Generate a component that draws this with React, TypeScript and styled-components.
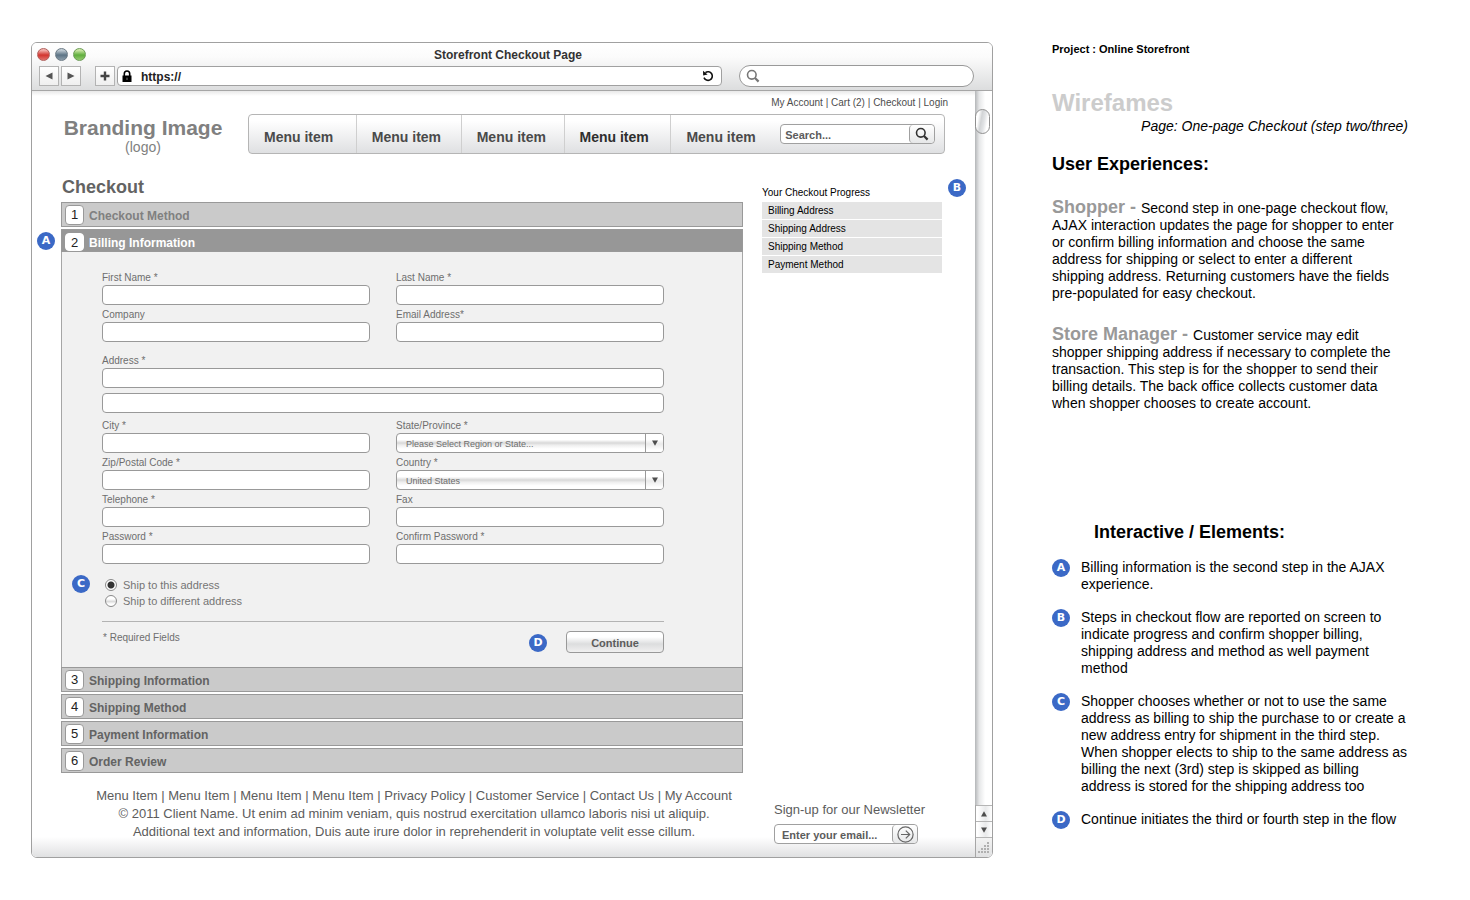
import React from "react";
import styled, { createGlobalStyle, css } from "styled-components";

const GlobalStyle = createGlobalStyle`
  *, *::before, *::after { box-sizing: border-box; }
  body {
    margin: 0;
    background: #fff;
    color: #000;
    font-family: "Liberation Sans", Arial, Helvetica, sans-serif;
  }
  h1, h2, h3, p, ul, ol { margin: 0; padding: 0; }
  ul, ol { list-style: none; }
  a { color: inherit; text-decoration: none; }
  button, input, select { font-family: inherit; margin: 0; }
`;

const Page = styled.div`
  display: grid;
  grid-template-columns: minmax(0, 1fr) 356px;
  column-gap: 59px;
  align-items: start;
  padding: 42px 62px 42px 31px;
`;

/* ---------- browser window ---------- */

const Window = styled.main`
  border: 1px solid #a0a0a0;
  border-radius: 6px;
  overflow: hidden;
`;

const Chrome = styled.header`
  padding: 2px 18px 3px 5px;
  border-bottom: 1px solid #a6a6a6;
  background: linear-gradient(#fff 0%, #fbfbfb 30%, #dcddde 100%);
`;

const TitleRow = styled.div`
  display: grid;
  grid-template-columns: 60px minmax(0, 1fr) 55px;
  align-items: center;
  height: 19px;
`;

const Lights = styled.div`
  display: flex;
  gap: 5px;
`;

const Light = styled.span<{ $top: string; $base: string; $rim: string }>`
  width: 13px;
  height: 13px;
  border: 1px solid ${(p) => p.$rim};
  border-radius: 50%;
  background: linear-gradient(${(p) => p.$top} 10%, ${(p) => p.$base} 55%, ${(p) => p.$top} 150%);
`;

const WindowTitle = styled.h1`
  font-size: 12px;
  line-height: 16px;
  font-weight: bold;
  color: #333;
  text-align: center;
`;

const ToolRow = styled.div`
  display: flex;
  align-items: center;
  gap: 2px;
  height: 22px;
  margin-top: 1px;
  padding-left: 2px;
`;

const ToolButton = styled.button<{ $spaced?: boolean }>`
  display: flex;
  align-items: center;
  justify-content: center;
  width: 20px;
  height: 20px;
  margin-left: ${(p) => (p.$spaced ? 12 : 0)}px;
  padding: 0;
  border: 1px solid #b3b3b3;
  background: linear-gradient(#fff, #efefef);
`;

const AddressBar = styled.label`
  display: flex;
  flex: 1;
  align-items: center;
  gap: 9px;
  min-width: 0;
  height: 20px;
  margin-right: 15px;
  padding: 0 7px 0 4px;
  border: 1px solid #a0a0a0;
  border-radius: 4px;
  background: #fff;
`;

const BareInput = styled.input`
  flex: 1;
  min-width: 0;
  padding: 2px 0 0;
  border: 0;
  outline: 0;
  background: transparent;
  font-size: 12px;
  line-height: 16px;
  font-weight: bold;
  color: #222;
`;

const ChromeSearch = styled.label`
  display: flex;
  flex: 0 0 235px;
  align-items: center;
  gap: 6px;
  height: 22px;
  padding: 0 8px 0 6px;
  border: 1px solid #999;
  border-radius: 11px;
  background: #fff;
`;

const Viewport = styled.div`
  display: grid;
  grid-template-columns: minmax(0, 1fr) 17px;
`;

const Content = styled.div`
  padding: 6px 27px 13px 29px;
  background:
    linear-gradient(#e9e9e9, #fff) top / 100% 5px no-repeat,
    linear-gradient(#fff, #e0e1e2) bottom / 100% 20px no-repeat,
    #fff;
`;

/* ---------- scroll bar ---------- */

const ScrollBar = styled.div`
  display: flex;
  flex-direction: column;
  background: linear-gradient(90deg, #b4b6b8, #e6e7e8 25%, #fff 60%);
`;

const ScrollThumb = styled.span`
  width: 15px;
  height: 25px;
  margin-top: 18px;
  border: 1px solid #8f8f8f;
  border-radius: 8px;
  background: linear-gradient(100deg, #fff 20%, #d2d4d6 40%, #e2e4e6 60%, #fff 80%);
`;

const ScrollEnd = styled.div`
  margin-top: auto;
  border-left: 1px solid #a6a6a6;
`;

const ScrollButton = styled.button`
  display: flex;
  align-items: center;
  justify-content: center;
  width: 16px;
  height: 16px;
  padding: 0;
  border: 0;
  border-top: 1px solid #b5b5b5;
  background: linear-gradient(90deg, #fff 10%, #e9eaeb 60%, #fff);
`;

const ResizeGrip = styled.div`
  display: flex;
  align-items: center;
  justify-content: center;
  height: 20px;
  border-top: 1px solid #b5b5b5;
  background: linear-gradient(#f3f3f3, #e0e1e2);
`;

/* ---------- store header ---------- */

const StoreHeader = styled.header`
  display: grid;
  grid-template-columns: 187px minmax(0, 1fr);
  align-items: end;
`;

const Brand = styled.a`
  width: 164px;
  text-align: center;
  color: #808080;
`;

const BrandName = styled.strong`
  display: block;
  font-size: 21px;
  line-height: 24px;
  white-space: nowrap;
`;

const BrandNote = styled.span`
  display: block;
  font-size: 14px;
  line-height: 14px;
`;

const AccountLinks = styled.nav`
  margin-bottom: 5px;
  font-size: 10px;
  line-height: 12px;
  text-align: right;
  color: #4d4d4d;
`;

const MenuBar = styled.nav`
  display: grid;
  grid-template-columns: 108fr 105fr 103fr 107fr 109fr 164fr;
  align-items: center;
  height: 40px;
  margin-right: 3px;
  border: 1px solid #b5b5b5;
  border-radius: 4px;
  background: linear-gradient(#fff 15%, #dfe0e2);
`;

const MenuLink = styled.a<{ $current?: boolean; $last?: boolean }>`
  height: 38px;
  padding: 6px 0 0 15px;
  border-right: ${(p) => (p.$last ? "0" : "1px solid #cfcfcf")};
  font-size: 14px;
  line-height: 32px;
  font-weight: bold;
  white-space: nowrap;
  color: ${(p) => (p.$current ? "#2e2e2e" : "#4a4a4a")};
`;

const InlineForm = styled.form<{ $width: number }>`
  display: flex;
  width: ${(p) => p.$width}px;
  height: 20px;
  border: 1px solid #a0a0a0;
  border-radius: 4px;
  background: #fff;
  overflow: hidden;
`;

const InlineInput = styled.input<{ $inset: number }>`
  flex: 1;
  min-width: 0;
  padding: 1px 0 0 ${(p) => p.$inset}px;
  border: 0;
  outline: 0;
  background: transparent;
  font-size: 11px;
  line-height: 14px;
  font-weight: bold;
  &::placeholder { color: #5c5c5c; opacity: 1; }
`;

const InlineSubmit = styled.button`
  display: flex;
  align-items: center;
  justify-content: center;
  flex: 0 0 25px;
  padding: 0;
  border: 0;
  border-left: 1px solid #a0a0a0;
  border-radius: 4px;
  background: linear-gradient(#fff, #e6e7e8);
`;

/* ---------- checkout ---------- */

const Columns = styled.div`
  display: grid;
  grid-template-columns: minmax(0, 1fr) 186px;
  column-gap: 19px;
  padding-top: 22px;
`;

const Heading = styled.h2`
  margin-bottom: 4px;
  padding-left: 1px;
  font-size: 18px;
  line-height: 22px;
  color: #636363;
`;

const Steps = styled.ol`
  display: flex;
  flex-direction: column;
  gap: 2px;
`;

const Step = styled.li`
  position: relative;
`;

const StepButton = styled.button<{ $tone?: "open" | "done" }>`
  display: flex;
  align-items: center;
  gap: 5px;
  width: 100%;
  height: 25px;
  padding: 0 3px;
  border: 1px solid #999;
  background: #cacaca;
  font-size: 12px;
  line-height: 16px;
  font-weight: bold;
  text-align: left;
  color: ${(p) => (p.$tone === "done" ? "#808080" : "#636363")};
  ${(p) =>
    p.$tone === "open" &&
    css`
      height: 23px;
      padding-top: 2px;
      background: #979797;
      color: #fff;
    `}
`;

const StepNumber = styled.span<{ $open?: boolean }>`
  width: 19px;
  height: ${(p) => (p.$open ? 18 : 20)}px;
  border: 1px solid ${(p) => (p.$open ? "#fff" : "#999")};
  border-radius: 4px;
  background: #fff;
  font-size: 13px;
  line-height: 18px;
  font-weight: normal;
  text-align: center;
  color: #222;
`;

const StepTitle = styled.span`
  padding-top: 2px;
`;

const Panel = styled.form`
  margin-bottom: -2px;
  padding: 19px 78px 14px 40px;
  border: 1px solid #a6a6a6;
  border-top: 0;
  border-bottom: 0;
  background: #f1f1f1;
`;

const FieldGrid = styled.div`
  display: grid;
  grid-template-columns: minmax(0, 1fr) minmax(0, 1fr);
  gap: 3px 26px;
`;

const AddressGroup = styled.div`
  display: flex;
  flex-direction: column;
  gap: 5px;
  margin: 12px 0 6px;
`;

const Field = styled.div`
  display: flex;
  flex-direction: column;
`;

const Label = styled.label`
  font-size: 10px;
  line-height: 14px;
  color: #6e6e6e;
`;

const TextInput = styled.input`
  width: 100%;
  height: 20px;
  padding: 0 8px;
  border: 1px solid #999;
  border-radius: 4px;
  outline: 0;
  background: #fff;
  font-size: 11px;
`;

const SelectWrap = styled.div`
  position: relative;
  height: 20px;
`;

const Select = styled.select`
  display: block;
  appearance: none;
  width: 100%;
  height: 20px;
  padding: 1px 24px 0 9px;
  border: 1px solid #999;
  border-radius: 4px;
  outline: 0;
  background: linear-gradient(#fff 32%, #d8d8d8 50%, #eee 62%, #fff 82%);
  font-size: 9px;
  color: #6e6e6e;
`;

const SelectArrow = styled.span`
  position: absolute;
  top: 1px;
  right: 1px;
  bottom: 1px;
  display: flex;
  align-items: center;
  justify-content: center;
  width: 18px;
  border-left: 1px solid #999;
  border-radius: 0 3px 3px 0;
  background: linear-gradient(#fff 30%, #eaeaea 55%, #fff 90%);
  pointer-events: none;
`;

const Choices = styled.div`
  position: relative;
  display: flex;
  flex-direction: column;
  margin: 13px 0 12px;
  padding-left: 3px;
`;

const Choice = styled.label`
  display: flex;
  align-items: center;
  gap: 6px;
  font-size: 11px;
  line-height: 16px;
  color: #757575;
`;

const Radio = styled.input`
  appearance: none;
  width: 12px;
  height: 12px;
  border: 1px solid #8a8a8a;
  border-radius: 50%;
  background: linear-gradient(#fff 30%, #dcdcdc 55%, #fff 80%);
  &:checked {
    background: radial-gradient(circle, #333 0 3px, #fff 4px);
  }
`;

const PanelFooter = styled.div`
  position: relative;
  display: flex;
  justify-content: space-between;
  padding-top: 9px;
  border-top: 1px solid #b3b3b3;
`;

const Required = styled.p`
  padding-left: 1px;
  font-size: 10px;
  line-height: 14px;
  color: #6e6e6e;
`;

const ContinueButton = styled.button`
  width: 98px;
  height: 22px;
  padding: 1px 0 0;
  border: 1px solid #999;
  border-radius: 4px;
  background: linear-gradient(#fff 25%, #dcddde 60%, #f0f0f0);
  font-size: 11px;
  line-height: 14px;
  font-weight: bold;
  color: #5c5c5c;
`;

const Progress = styled.aside`
  position: relative;
  padding: 11px 6px 0 0;
`;

const ProgressTitle = styled.h3`
  margin-bottom: 3px;
  font-size: 10px;
  line-height: 12px;
  font-weight: normal;
`;

const ProgressList = styled.ol`
  display: flex;
  flex-direction: column;
  gap: 1px;
  font-size: 10px;
  line-height: 17px;
`;

const ProgressItem = styled.li`
  padding-left: 6px;
  background: #e4e4e4;
`;

const Badge = styled.span`
  display: flex;
  align-items: center;
  justify-content: center;
  flex: 0 0 18px;
  width: 18px;
  height: 18px;
  border-radius: 50%;
  background: #3b69c6;
  font-family: "DejaVu Sans", sans-serif;
  font-size: 11px;
  line-height: 18px;
  font-weight: bold;
  color: #fff;
`;

const PinnedBadge = styled(Badge)<{ $left?: number; $right?: number; $top: number }>`
  position: absolute;
  top: ${(p) => p.$top}px;
  ${(p) => (p.$left !== undefined ? `left: ${p.$left}px;` : `right: ${p.$right}px;`)}
`;

/* ---------- store footer ---------- */

const StoreFooter = styled.footer`
  display: grid;
  grid-template-columns: minmax(0, 1fr) 174px;
  column-gap: 31px;
  padding-top: 14px;
  font-size: 13px;
  line-height: 18px;
  color: #5c5c5c;
`;

const FooterText = styled.div`
  padding-left: 24px;
  text-align: center;
`;

const Newsletter = styled.div`
  padding-top: 14px;
`;

const NewsletterTitle = styled.h3`
  margin-bottom: 5px;
  font-size: 13px;
  line-height: 18px;
  font-weight: normal;
`;

/* ---------- notes ---------- */

const Notes = styled.aside`
  font-size: 14px;
  line-height: 17px;
`;

const Project = styled.p`
  font-size: 11px;
  line-height: 14px;
  font-weight: bold;
`;

const NotesTitle = styled.h2`
  margin-top: 32px;
  font-size: 24px;
  line-height: 30px;
  color: #ccc;
`;

const PageName = styled.p`
  text-align: right;
  font-style: italic;
`;

const NotesHeading = styled.h3<{ $indent?: boolean }>`
  margin-top: ${(p) => (p.$indent ? 109 : 18)}px;
  padding-left: ${(p) => (p.$indent ? 42 : 0)}px;
  font-size: 18px;
  line-height: 22px;
`;

const Persona = styled.p`
  margin-top: 24px;
  padding-right: 10px;
`;

const PersonaName = styled.strong`
  font-size: 18px;
  line-height: 17px;
  color: #999;
`;

const NoteList = styled.ul`
  display: flex;
  flex-direction: column;
  gap: 16px;
  margin-top: 16px;
`;

const Note = styled.li`
  display: flex;
  gap: 11px;
`;

/* ---------- icons ---------- */

const Triangle = ({ points, color = "#4d4d4d" }: { points: string; color?: string }) => (
  <svg width="8" height="8" viewBox="0 0 8 8" aria-hidden="true">
    <polygon points={points} fill={color} />
  </svg>
);

const UP = "4,1.3 7,6.5 1,6.5";
const DOWN = "1,1.5 7,1.5 4,6.7";

const SearchIcon = ({ color }: { color: string }) => (
  <svg width="14" height="14" viewBox="0 0 14 14" fill="none" stroke={color} aria-hidden="true">
    <circle cx="5.8" cy="5.8" r="4.3" strokeWidth="1.6" />
    <path d="M9 9l3.6 3.6" strokeWidth="2.2" />
  </svg>
);

const LockIcon = () => (
  <svg width="10" height="13" viewBox="0 0 10 13" aria-hidden="true">
    <path d="M2.3 6V3.7a2.7 2.7 0 0 1 5.4 0V6" fill="none" stroke="#000" strokeWidth="1.6" />
    <rect x="0.5" y="5.5" width="9" height="6.5" fill="#000" />
    <path d="M5 7.6v2.4" stroke="#777" />
  </svg>
);

const ReloadIcon = () => (
  <svg width="12" height="12" viewBox="0 0 12 12" aria-hidden="true">
    <path d="M3.4 2.6A4.3 4.3 0 1 1 2 7.6" fill="none" stroke="#111" strokeWidth="1.6" />
    <path d="M1 0.8L1.2 5.4L5.6 4.6Z" fill="#111" />
  </svg>
);

const ArrowCircleIcon = () => (
  <svg width="17" height="17" viewBox="0 0 17 17" fill="none" stroke="#666" strokeWidth="1.2" aria-hidden="true">
    <circle cx="8.5" cy="8.5" r="7.6" />
    <path d="M4 8.5h8.6M8.8 4.6l3.9 3.9l-3.9 3.9" />
  </svg>
);

const GripIcon = () => (
  <svg width="12" height="12" viewBox="0 0 12 12" fill="#b0b0b0" aria-hidden="true">
    {[[9, 0], [9, 3], [6, 3], [9, 6], [6, 6], [3, 6], [9, 9], [6, 9], [3, 9], [0, 9]].map(([x, y]) => (
      <rect key={`${x}-${y}`} x={x} y={y} width="2" height="2" />
    ))}
  </svg>
);

/* ---------- form pieces ---------- */

const InputField = ({ id, label, type = "text" }: { id: string; label: string; type?: string }) => (
  <Field>
    <Label htmlFor={id}>{label}</Label>
    <TextInput id={id} type={type} />
  </Field>
);

const SelectField = ({ id, label, option }: { id: string; label: string; option: string }) => (
  <Field>
    <Label htmlFor={id}>{label}</Label>
    <SelectWrap>
      <Select id={id}>
        <option>{option}</option>
      </Select>
      <SelectArrow>
        <Triangle points={DOWN} />
      </SelectArrow>
    </SelectWrap>
  </Field>
);

const StepHeader = ({ n, title, tone }: { n: number; title: string; tone?: "open" | "done" }) => (
  <StepButton type="button" $tone={tone} aria-expanded={tone === "open"}>
    <StepNumber $open={tone === "open"}>{n}</StepNumber>
    <StepTitle>{title}</StepTitle>
  </StepButton>
);

const LinkLine = ({ items }: { items: string[] }) => (
  <>
    {items.map((item, i) => (
      <React.Fragment key={i}>
        {i > 0 && " | "}
        <a href="#">{item}</a>
      </React.Fragment>
    ))}
  </>
);

const notes = [
  ["A", "Billing information is the second step in the AJAX experience."],
  ["B", "Steps in checkout flow are reported on screen to indicate progress and confirm shopper billing, shipping address and method as well payment method"],
  ["C", "Shopper chooses whether or not to use the same address as billing to ship the purchase to or create a new address entry for shipment in the third step. When shopper elects to ship to the same address as billing the next (3rd) step is skipped as billing address is stored for the shipping address too"],
  ["D", "Continue initiates the third or fourth step in the flow"],
];

export default function App() {
  return (
    <>
      <GlobalStyle />
      <Page>
        <Window>
          <Chrome>
            <TitleRow>
              <Lights>
                <Light $top="#f3b5b0" $base="#d2352f" $rim="#b0605c" />
                <Light $top="#c3ced6" $base="#5c7385" $rim="#6d7b86" />
                <Light $top="#cfe8a8" $base="#5fae3c" $rim="#6c9c56" />
              </Lights>
              <WindowTitle>Storefront Checkout Page</WindowTitle>
            </TitleRow>
            <ToolRow>
              <ToolButton type="button" aria-label="Back">
                <Triangle points="0.5,4 7.5,0.5 7.5,7.5" color="#555" />
              </ToolButton>
              <ToolButton type="button" aria-label="Forward">
                <Triangle points="7.5,4 0.5,0.5 0.5,7.5" color="#555" />
              </ToolButton>
              <ToolButton type="button" aria-label="New tab" $spaced>
                <svg width="10" height="10" viewBox="0 0 10 10" stroke="#444" strokeWidth="2.4" aria-hidden="true">
                  <path d="M5 0.5v9M0.5 5h9" />
                </svg>
              </ToolButton>
              <AddressBar>
                <LockIcon />
                <BareInput aria-label="Address" defaultValue="https://" />
                <ReloadIcon />
              </AddressBar>
              <ChromeSearch>
                <SearchIcon color="#777" />
                <BareInput aria-label="Web search" />
              </ChromeSearch>
            </ToolRow>
          </Chrome>

          <Viewport>
            <Content>
              <StoreHeader>
                <Brand href="#">
                  <BrandName>Branding Image</BrandName>
                  <BrandNote>(logo)</BrandNote>
                </Brand>
                <div>
                  <AccountLinks>
                    <LinkLine items={["My Account", "Cart (2)", "Checkout", "Login"]} />
                  </AccountLinks>
                  <MenuBar>
                    {[0, 1, 2, 3, 4].map((i) => (
                      <MenuLink key={i} href="#" $current={i === 3} $last={i === 4}>
                        Menu item
                      </MenuLink>
                    ))}
                    <InlineForm $width={155}>
                      <InlineInput $inset={4} aria-label="Search" placeholder="Search..." />
                      <InlineSubmit type="button" aria-label="Search">
                        <SearchIcon color="#333" />
                      </InlineSubmit>
                    </InlineForm>
                  </MenuBar>
                </div>
              </StoreHeader>

              <Columns>
                <section>
                  <Heading>Checkout</Heading>
                  <Steps>
                    <Step>
                      <StepHeader n={1} title="Checkout Method" tone="done" />
                    </Step>
                    <Step>
                      <PinnedBadge $left={-24} $top={3}>A</PinnedBadge>
                      <StepHeader n={2} title="Billing Information" tone="open" />
                      <Panel>
                        <FieldGrid>
                          <InputField id="first" label="First Name *" />
                          <InputField id="last" label="Last Name *" />
                          <InputField id="company" label="Company" />
                          <InputField id="email" label="Email Address*" type="email" />
                        </FieldGrid>
                        <AddressGroup>
                          <InputField id="address" label="Address *" />
                          <TextInput aria-label="Address line 2" />
                        </AddressGroup>
                        <FieldGrid>
                          <InputField id="city" label="City *" />
                          <SelectField id="state" label="State/Province *" option="Please Select Region or State..." />
                          <InputField id="zip" label="Zip/Postal Code *" />
                          <SelectField id="country" label="Country *" option="United States" />
                          <InputField id="phone" label="Telephone *" type="tel" />
                          <InputField id="fax" label="Fax" type="tel" />
                          <InputField id="password" label="Password *" type="password" />
                          <InputField id="confirm" label="Confirm Password *" type="password" />
                        </FieldGrid>
                        <Choices>
                          <PinnedBadge $left={-30} $top={-2}>C</PinnedBadge>
                          <Choice>
                            <Radio type="radio" name="ship" defaultChecked />
                            Ship to this address
                          </Choice>
                          <Choice>
                            <Radio type="radio" name="ship" />
                            Ship to different address
                          </Choice>
                        </Choices>
                        <PanelFooter>
                          <Required>* Required Fields</Required>
                          <PinnedBadge $right={117} $top={12}>D</PinnedBadge>
                          <ContinueButton type="button">Continue</ContinueButton>
                        </PanelFooter>
                      </Panel>
                    </Step>
                    {["Shipping Information", "Shipping Method", "Payment Information", "Order Review"].map((title, i) => (
                      <Step key={title}>
                        <StepHeader n={i + 3} title={title} />
                      </Step>
                    ))}
                  </Steps>
                </section>

                <Progress>
                  <ProgressTitle>Your Checkout Progress</ProgressTitle>
                  <PinnedBadge $right={-18} $top={3}>B</PinnedBadge>
                  <ProgressList>
                    {["Billing Address", "Shipping Address", "Shipping Method", "Payment Method"].map((item) => (
                      <ProgressItem key={item}>{item}</ProgressItem>
                    ))}
                  </ProgressList>
                </Progress>
              </Columns>

              <StoreFooter>
                <FooterText>
                  <nav>
                    <LinkLine
                      items={["Menu Item", "Menu Item", "Menu Item", "Menu Item", "Privacy Policy", "Customer Service", "Contact Us", "My Account"]}
                    />
                  </nav>
                  <p>© 2011 Client Name. Ut enim ad minim veniam, quis nostrud exercitation ullamco laboris nisi ut aliquip.</p>
                  <p>Additional text and information, Duis aute irure dolor in reprehenderit in voluptate velit esse cillum.</p>
                </FooterText>
                <Newsletter>
                  <NewsletterTitle>Sign-up for our Newsletter</NewsletterTitle>
                  <InlineForm $width={144}>
                    <InlineInput $inset={7} aria-label="Email" placeholder="Enter your email..." />
                    <InlineSubmit type="button" aria-label="Sign up">
                      <ArrowCircleIcon />
                    </InlineSubmit>
                  </InlineForm>
                </Newsletter>
              </StoreFooter>
            </Content>

            <ScrollBar>
              <ScrollThumb />
              <ScrollEnd>
                <ScrollButton type="button" aria-label="Scroll up">
                  <Triangle points={UP} />
                </ScrollButton>
                <ScrollButton type="button" aria-label="Scroll down">
                  <Triangle points={DOWN} />
                </ScrollButton>
                <ResizeGrip>
                  <GripIcon />
                </ResizeGrip>
              </ScrollEnd>
            </ScrollBar>
          </Viewport>
        </Window>

        <Notes>
          <Project>Project : Online Storefront</Project>
          <NotesTitle>Wirefames</NotesTitle>
          <PageName>Page: One-page Checkout (step two/three)</PageName>
          <NotesHeading>User Experiences:</NotesHeading>
          <Persona>
            <PersonaName>Shopper - </PersonaName>
            Second step in one-page checkout flow, AJAX interaction updates the page for shopper to enter or confirm
            billing information and choose the same address for shipping or select to enter a different shipping
            address. Returning customers have the fields pre-populated for easy checkout.
          </Persona>
          <Persona>
            <PersonaName>Store Manager - </PersonaName>
            Customer service may edit shopper shipping address if necessary to complete the transaction. This step is
            for the shopper to send their billing details. The back office collects customer data when shopper chooses
            to create account.
          </Persona>
          <NotesHeading $indent>Interactive / Elements:</NotesHeading>
          <NoteList>
            {notes.map(([letter, text]) => (
              <Note key={letter}>
                <Badge>{letter}</Badge>
                <p>{text}</p>
              </Note>
            ))}
          </NoteList>
        </Notes>
      </Page>
    </>
  );
}
